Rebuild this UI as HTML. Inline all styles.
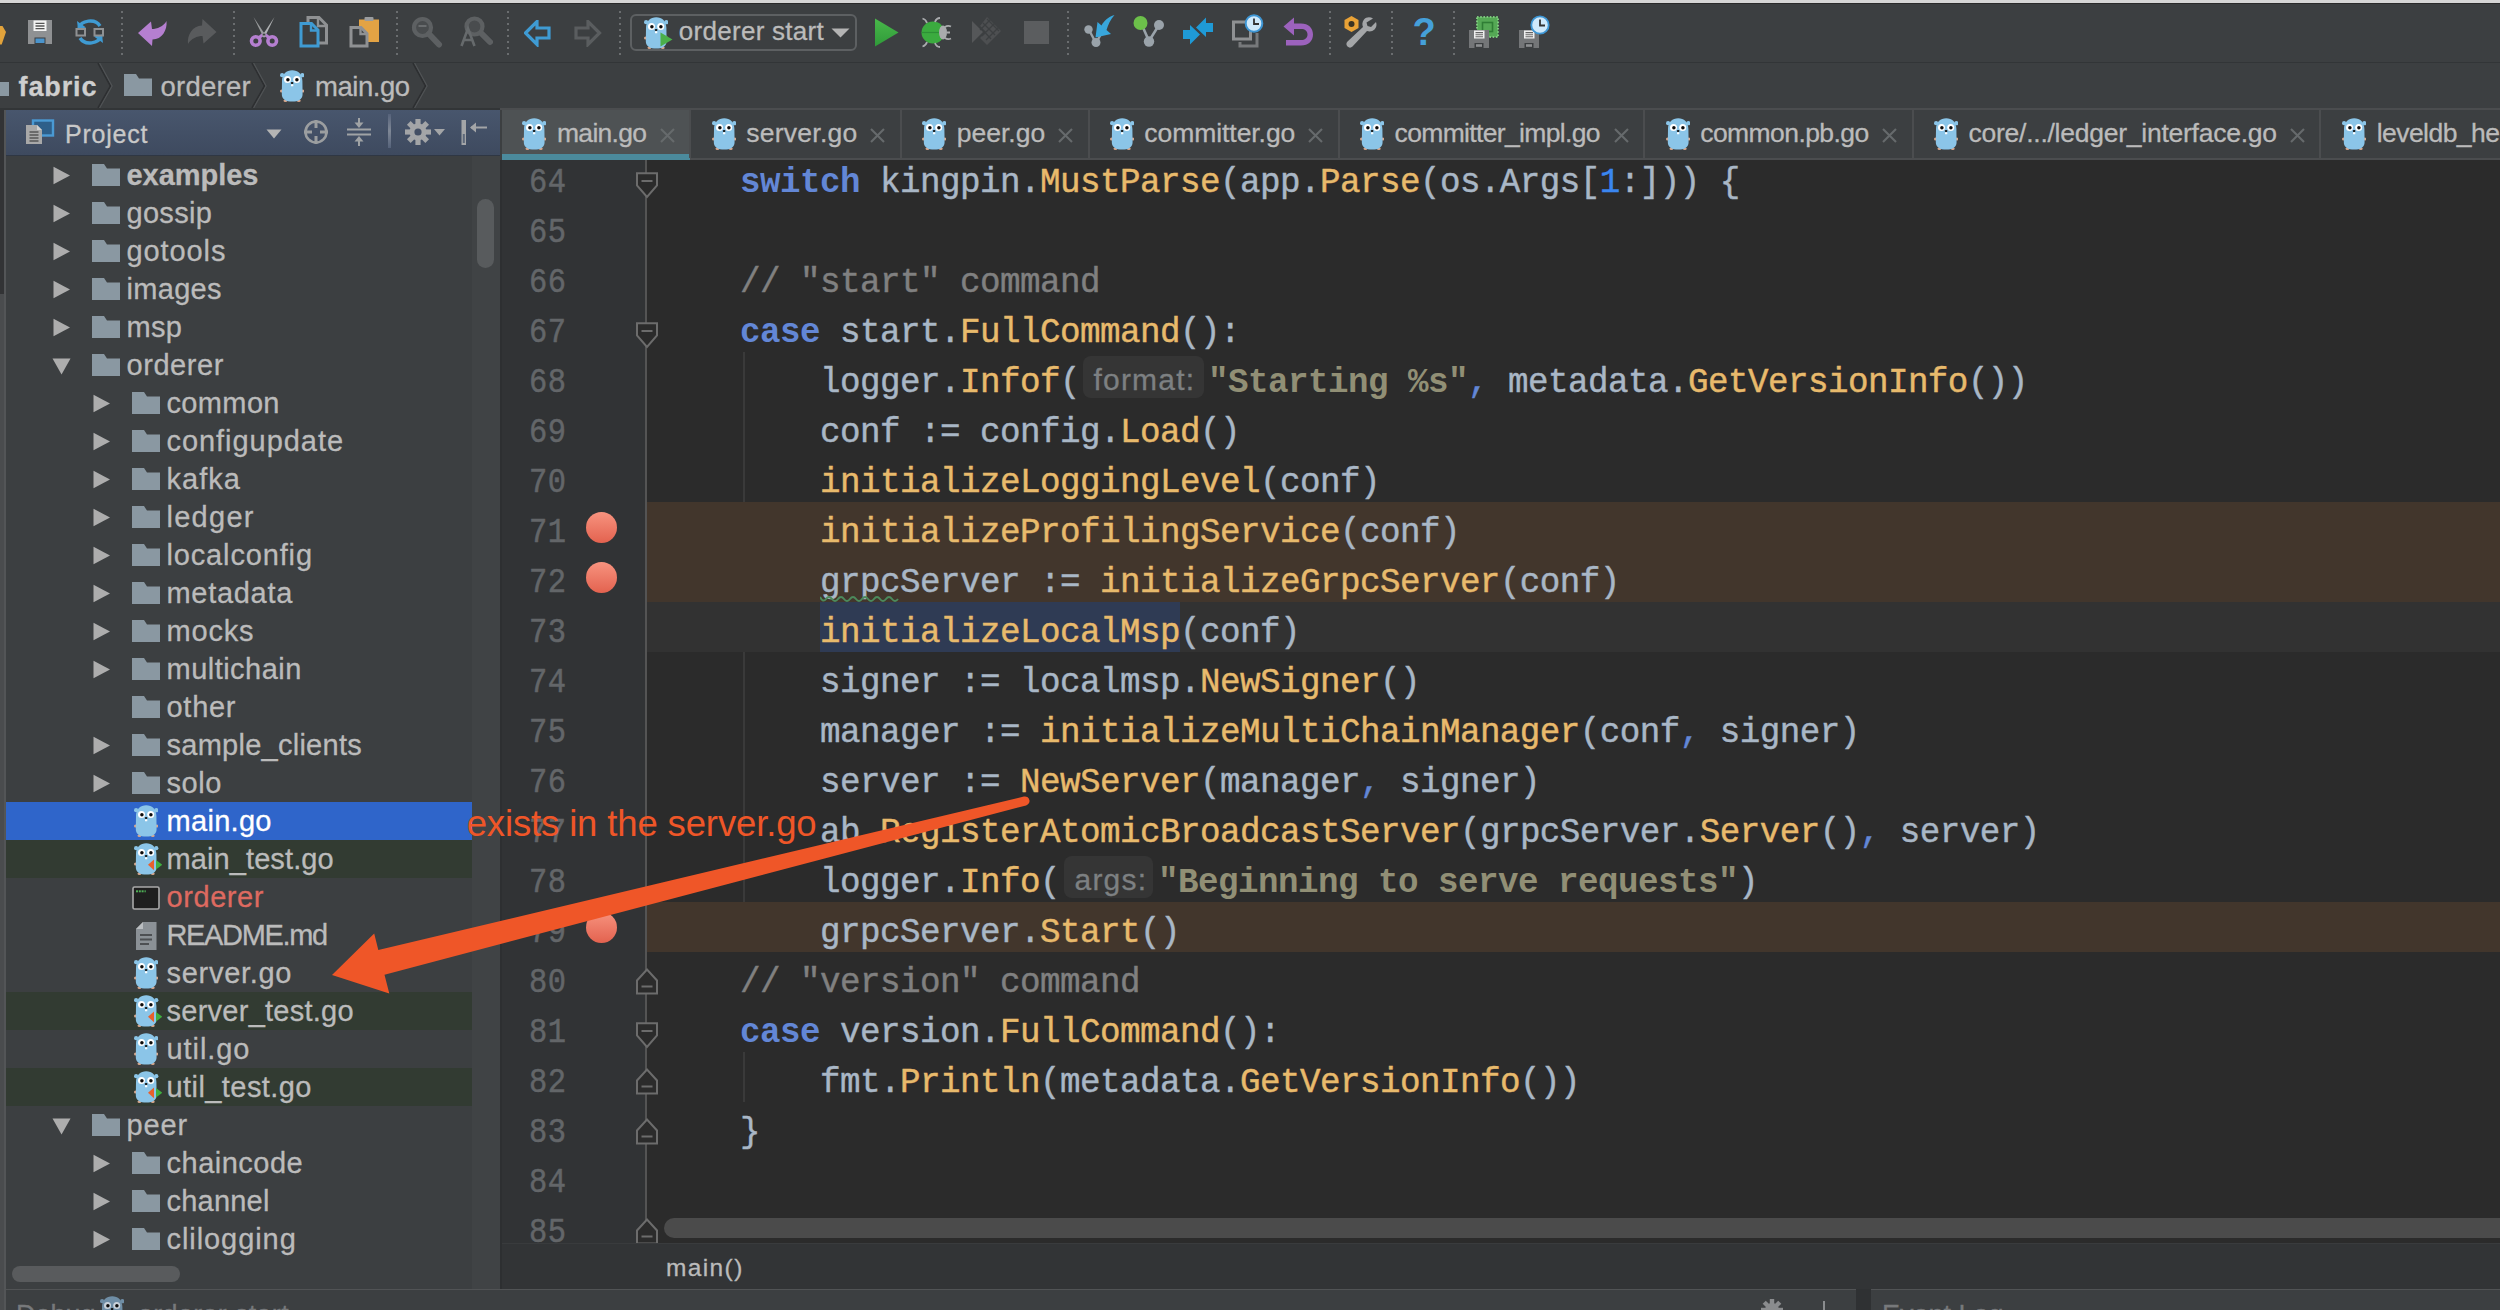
<!DOCTYPE html>
<html><head><meta charset="utf-8"><title>GoLand - fabric - main.go</title>
<style>
html,body{margin:0;padding:0;}
body{width:2500px;height:1310px;overflow:hidden;position:relative;background:#3c3f41;font-family:"Liberation Sans",sans-serif;color:#bbbbbb;}
.abs{position:absolute;display:block;}
.t{position:absolute;white-space:pre;line-height:1;-webkit-text-stroke-width:0.3px;}
.code{-webkit-text-stroke-width:0.45px;position:absolute;white-space:pre;font-family:"Liberation Mono",monospace;font-size:34.2px;letter-spacing:-0.52px;line-height:50px;height:50px;color:#a9b7c6;}
.ln{-webkit-text-stroke-width:0.5px;transform:scaleX(0.89);transform-origin:0 0;position:absolute;white-space:pre;font-family:"Liberation Mono",monospace;font-size:34.2px;letter-spacing:0.5px;line-height:50px;height:50px;color:#636669;left:528px;}
.kw{color:#6387d6;font-weight:bold;-webkit-text-stroke-width:0;}
.fn{color:#e8ba6c;}
.cm{color:#808080;}
.st{color:#918f75;font-weight:bold;-webkit-text-stroke-width:0;}
.nu{color:#3a86f0;}
.pu{color:#6387d6;}
.hint{position:absolute;background:#353535;border-radius:8px;color:#7d8082;font-family:"Liberation Sans",sans-serif;white-space:pre;}
</style></head><body>

<div class="abs" style="left:0;top:0;width:2500px;height:4px;background:#d6d6d6;border-bottom:1px solid #2a2a2a;box-sizing:border-box"></div>
<div class="abs" style="left:0;top:62px;width:2500px;height:1px;background:#323537"></div>
<div class="abs" style="left:0;top:108px;width:2500px;height:2px;background:#323537"></div>
<svg class="abs" style="left:120.6px;top:11px" width="2" height="44" viewBox="0 0 2 44"><rect x="0" y="0" width="2" height="2" fill="#6a6d6f"/><rect x="0" y="6" width="2" height="2" fill="#6a6d6f"/><rect x="0" y="12" width="2" height="2" fill="#6a6d6f"/><rect x="0" y="18" width="2" height="2" fill="#6a6d6f"/><rect x="0" y="24" width="2" height="2" fill="#6a6d6f"/><rect x="0" y="30" width="2" height="2" fill="#6a6d6f"/><rect x="0" y="36" width="2" height="2" fill="#6a6d6f"/><rect x="0" y="42" width="2" height="2" fill="#6a6d6f"/></svg>
<svg class="abs" style="left:233px;top:11px" width="2" height="44" viewBox="0 0 2 44"><rect x="0" y="0" width="2" height="2" fill="#6a6d6f"/><rect x="0" y="6" width="2" height="2" fill="#6a6d6f"/><rect x="0" y="12" width="2" height="2" fill="#6a6d6f"/><rect x="0" y="18" width="2" height="2" fill="#6a6d6f"/><rect x="0" y="24" width="2" height="2" fill="#6a6d6f"/><rect x="0" y="30" width="2" height="2" fill="#6a6d6f"/><rect x="0" y="36" width="2" height="2" fill="#6a6d6f"/><rect x="0" y="42" width="2" height="2" fill="#6a6d6f"/></svg>
<svg class="abs" style="left:395.5px;top:11px" width="2" height="44" viewBox="0 0 2 44"><rect x="0" y="0" width="2" height="2" fill="#6a6d6f"/><rect x="0" y="6" width="2" height="2" fill="#6a6d6f"/><rect x="0" y="12" width="2" height="2" fill="#6a6d6f"/><rect x="0" y="18" width="2" height="2" fill="#6a6d6f"/><rect x="0" y="24" width="2" height="2" fill="#6a6d6f"/><rect x="0" y="30" width="2" height="2" fill="#6a6d6f"/><rect x="0" y="36" width="2" height="2" fill="#6a6d6f"/><rect x="0" y="42" width="2" height="2" fill="#6a6d6f"/></svg>
<svg class="abs" style="left:507px;top:11px" width="2" height="44" viewBox="0 0 2 44"><rect x="0" y="0" width="2" height="2" fill="#6a6d6f"/><rect x="0" y="6" width="2" height="2" fill="#6a6d6f"/><rect x="0" y="12" width="2" height="2" fill="#6a6d6f"/><rect x="0" y="18" width="2" height="2" fill="#6a6d6f"/><rect x="0" y="24" width="2" height="2" fill="#6a6d6f"/><rect x="0" y="30" width="2" height="2" fill="#6a6d6f"/><rect x="0" y="36" width="2" height="2" fill="#6a6d6f"/><rect x="0" y="42" width="2" height="2" fill="#6a6d6f"/></svg>
<svg class="abs" style="left:619px;top:11px" width="2" height="44" viewBox="0 0 2 44"><rect x="0" y="0" width="2" height="2" fill="#6a6d6f"/><rect x="0" y="6" width="2" height="2" fill="#6a6d6f"/><rect x="0" y="12" width="2" height="2" fill="#6a6d6f"/><rect x="0" y="18" width="2" height="2" fill="#6a6d6f"/><rect x="0" y="24" width="2" height="2" fill="#6a6d6f"/><rect x="0" y="30" width="2" height="2" fill="#6a6d6f"/><rect x="0" y="36" width="2" height="2" fill="#6a6d6f"/><rect x="0" y="42" width="2" height="2" fill="#6a6d6f"/></svg>
<svg class="abs" style="left:1067px;top:11px" width="2" height="44" viewBox="0 0 2 44"><rect x="0" y="0" width="2" height="2" fill="#6a6d6f"/><rect x="0" y="6" width="2" height="2" fill="#6a6d6f"/><rect x="0" y="12" width="2" height="2" fill="#6a6d6f"/><rect x="0" y="18" width="2" height="2" fill="#6a6d6f"/><rect x="0" y="24" width="2" height="2" fill="#6a6d6f"/><rect x="0" y="30" width="2" height="2" fill="#6a6d6f"/><rect x="0" y="36" width="2" height="2" fill="#6a6d6f"/><rect x="0" y="42" width="2" height="2" fill="#6a6d6f"/></svg>
<svg class="abs" style="left:1329px;top:11px" width="2" height="44" viewBox="0 0 2 44"><rect x="0" y="0" width="2" height="2" fill="#6a6d6f"/><rect x="0" y="6" width="2" height="2" fill="#6a6d6f"/><rect x="0" y="12" width="2" height="2" fill="#6a6d6f"/><rect x="0" y="18" width="2" height="2" fill="#6a6d6f"/><rect x="0" y="24" width="2" height="2" fill="#6a6d6f"/><rect x="0" y="30" width="2" height="2" fill="#6a6d6f"/><rect x="0" y="36" width="2" height="2" fill="#6a6d6f"/><rect x="0" y="42" width="2" height="2" fill="#6a6d6f"/></svg>
<svg class="abs" style="left:1391px;top:11px" width="2" height="44" viewBox="0 0 2 44"><rect x="0" y="0" width="2" height="2" fill="#6a6d6f"/><rect x="0" y="6" width="2" height="2" fill="#6a6d6f"/><rect x="0" y="12" width="2" height="2" fill="#6a6d6f"/><rect x="0" y="18" width="2" height="2" fill="#6a6d6f"/><rect x="0" y="24" width="2" height="2" fill="#6a6d6f"/><rect x="0" y="30" width="2" height="2" fill="#6a6d6f"/><rect x="0" y="36" width="2" height="2" fill="#6a6d6f"/><rect x="0" y="42" width="2" height="2" fill="#6a6d6f"/></svg>
<svg class="abs" style="left:1453px;top:11px" width="2" height="44" viewBox="0 0 2 44"><rect x="0" y="0" width="2" height="2" fill="#6a6d6f"/><rect x="0" y="6" width="2" height="2" fill="#6a6d6f"/><rect x="0" y="12" width="2" height="2" fill="#6a6d6f"/><rect x="0" y="18" width="2" height="2" fill="#6a6d6f"/><rect x="0" y="24" width="2" height="2" fill="#6a6d6f"/><rect x="0" y="30" width="2" height="2" fill="#6a6d6f"/><rect x="0" y="36" width="2" height="2" fill="#6a6d6f"/><rect x="0" y="42" width="2" height="2" fill="#6a6d6f"/></svg>
<svg class="abs" style="left:0px;top:26px" width="7" height="19" viewBox="0 0 7 19"><path d="M0,0 H2.5 L6,6 L1.7,18.5 H0 Z" fill="#e2a33b"/></svg>
<svg class="abs" style="left:28px;top:20px" width="24" height="24" viewBox="0 0 24 24"><path d="M0,0 H24 V24 H0 Z" fill="#8f9193"/><rect x="5.5" y="0.5" width="13" height="10.5" fill="#f4f4f4"/><path d="M7.5,3.3 H16.5 M7.5,6 H16.5 M7.5,8.7 H16.5" stroke="#555" stroke-width="1.3"/><rect x="6.5" y="17.5" width="11" height="6.5" fill="#3c3f41"/><rect x="7.5" y="18.5" width="9" height="4.5" fill="#4a94cc"/></svg>
<svg class="abs" style="left:75px;top:17px" width="30" height="30" viewBox="0 0 30 30"><path d="M4,11 C6,3.5 20,1 25,9" fill="none" stroke="#3f9bd3" stroke-width="3.4"/><path d="M2,4 L3,12.5 L11,10.5 Z" fill="#3f9bd3"/>
<path d="M26,19 C24,26.5 10,29 5,21" fill="none" stroke="#3f9bd3" stroke-width="3.4"/><path d="M28,26 L27,17.5 L19,19.5 Z" fill="#3f9bd3"/>
<rect x="1.5" y="12" width="8.5" height="6.5" fill="none" stroke="#8f9193" stroke-width="2"/><rect x="19.5" y="12" width="8.5" height="6.5" fill="none" stroke="#8f9193" stroke-width="2"/></svg>
<svg class="abs" style="left:137.5px;top:19.5px" width="30" height="27" viewBox="0 0 30 27"><path d="M0,13 L13,1.5 L14,9 C19,9 25.5,6.5 28.5,1 C29.5,10 24,19.5 14.5,19.5 L14,26 Z" fill="#b57fd0"/></svg>
<svg class="abs" style="left:187px;top:17.5px" width="30" height="27" viewBox="0 0 30 27"><g transform="rotate(180 14.75 13.5)"><path d="M0,13 L13,1.5 L14,9 C19,9 25.5,6.5 28.5,1 C29.5,10 24,19.5 14.5,19.5 L14,26 Z" fill="#595b5d"/></g></svg>
<svg class="abs" style="left:249px;top:16px" width="30" height="32" viewBox="0 0 30 32"><path d="M4.5,1 L17,20 L14.5,21.5 Z" fill="#9a9c9e"/><path d="M25.5,1 L13,20 L15.5,21.5 Z" fill="#b0b2b4"/>
<circle cx="6.8" cy="25" r="4.3" fill="none" stroke="#b57fd0" stroke-width="3.6"/><circle cx="23.2" cy="25" r="4.3" fill="none" stroke="#b57fd0" stroke-width="3.6"/>
<path d="M9.5,22 L14,18.5 M20.5,22 L16,18.5" stroke="#b57fd0" stroke-width="3"/><circle cx="15" cy="18.5" r="1.6" fill="#3c3f41" stroke="#9a9c9e" stroke-width="1"/></svg>
<svg class="abs" style="left:299px;top:16px" width="30" height="32" viewBox="0 0 30 32"><path d="M9,1.5 H20 L27.5,9 V27 H9 Z" fill="none" stroke="#8f9193" stroke-width="3"/><path d="M19,1.5 V10 H27.5" fill="none" stroke="#8f9193" stroke-width="2.4"/>
<path d="M2,7.5 H12.5 L19,14 V30 H2 Z" fill="#3c3f41" stroke="#3f9bd3" stroke-width="3"/><path d="M12,7.5 V14.5 H19" fill="none" stroke="#3f9bd3" stroke-width="2.4"/></svg>
<svg class="abs" style="left:349px;top:16px" width="31" height="32" viewBox="0 0 31 32"><rect x="10" y="3.5" width="20" height="22.5" fill="#e3a344"/><rect x="15.5" y="1" width="9" height="4" rx="1" fill="#9a9c9e"/>
<path d="M2,11.5 H12 L18,17.5 V30 H2 Z" fill="#3c3f41" stroke="#8f9193" stroke-width="3"/><path d="M11.5,11.5 V18 H18" fill="none" stroke="#8f9193" stroke-width="2.4"/></svg>
<svg class="abs" style="left:411px;top:16px" width="32" height="32" viewBox="0 0 32 32"><circle cx="11.5" cy="11.5" r="8.5" fill="#494c4e" stroke="#5d6062" stroke-width="4.2"/><path d="M18,18 L28,28.5" stroke="#5d6062" stroke-width="6" stroke-linecap="round"/><path d="M7.5,10 H15.5" stroke="#6a6d6f" stroke-width="2"/></svg>
<svg class="abs" style="left:460px;top:16px" width="33" height="32" viewBox="0 0 33 32"><circle cx="14.5" cy="10.5" r="8" fill="#494c4e" stroke="#5d6062" stroke-width="4.2"/><path d="M21,17 L30,26" stroke="#5d6062" stroke-width="6" stroke-linecap="round"/><path d="M1.5,30 L8,12.5 L14.5,30 M4,24 H12" fill="none" stroke="#666a6c" stroke-width="2.6"/></svg>
<svg class="abs" style="left:524px;top:19.5px" width="28" height="27" viewBox="0 0 28 27"><path d="M1.5,13 L13,1.5 V8 H25 V18 H13 V24.5 Z" fill="none" stroke="#3f9bd3" stroke-width="3.2" stroke-linejoin="miter"/><path d="M12,11 H22 V15 H12 Z" fill="#3c3f41"/></svg>
<svg class="abs" style="left:574px;top:19.5px" width="28" height="27" viewBox="0 0 28 27"><g transform="translate(27,0) scale(-1,1)"><path d="M1.5,13 L13,1.5 V8 H25 V18 H13 V24.5 Z" fill="none" stroke="#5a5d5f" stroke-width="3.2"/></g></svg>
<div class="abs" style="left:630px;top:14px;width:227px;height:37px;border:2px solid #5d6062;border-radius:6px;box-sizing:border-box;background:#3c3f41"></div>
<svg class="abs" style="left:644px;top:17px" width="24" height="32" viewBox="0 0 24 32">
<circle cx="2.1" cy="5.2" r="2.1" fill="#8bc5e8"/><circle cx="22.3" cy="5.2" r="2.1" fill="#8bc5e8"/>
<ellipse cx="1.5" cy="21" rx="1.5" ry="1.5" fill="#d9a78c"/><ellipse cx="22.7" cy="21" rx="1.5" ry="1.5" fill="#d9a78c"/>
<ellipse cx="5.4" cy="30.8" rx="1.9" ry="1.2" fill="#d9a78c"/><ellipse cx="18.8" cy="30.8" rx="1.9" ry="1.2" fill="#d9a78c"/>
<path d="M2,11 C2,4 6.5,0.2 12.2,0.2 C18,0.2 22.4,4 22.4,11 L22.6,24 C22.6,29.5 18.5,31.6 12.2,31.6 C6,31.6 1.8,29.5 1.8,24 Z" fill="#8bc5e8"/>
<circle cx="7.5" cy="9.4" r="3.5" fill="#ffffff"/><circle cx="16.7" cy="9.4" r="3.5" fill="#ffffff"/>
<circle cx="7.9" cy="9.7" r="1.75" fill="#0c0c0c"/><circle cx="16.9" cy="9.7" r="1.75" fill="#0c0c0c"/>
<rect x="11" y="14.3" width="2.3" height="1.9" rx="0.5" fill="#ffffff"/>
<ellipse cx="12.1" cy="13" rx="1.35" ry="1.05" fill="#111"/>
</svg>
<svg class="abs" style="left:660px;top:32px" width="13" height="15" viewBox="0 0 13 15"><path d="M0.5,0.5 L12.5,7.5 L0.5,14.5 Z" fill="#4bb04a"/></svg>
<div class="t" style="letter-spacing:0.28px;left:678.8px;top:18.3px;font-size:26px;color:#bbbbbb">orderer start</div>
<svg class="abs" style="left:831px;top:28px" width="19" height="10" viewBox="0 0 19 10"><path d="M0.5,0.5 H18.5 L9.5,9.5 Z" fill="#b4b4b4"/></svg>
<svg class="abs" style="left:874px;top:18px" width="25" height="29" viewBox="0 0 25 29"><defs><linearGradient id="gr" x1="0" y1="0" x2="0" y2="1"><stop offset="0" stop-color="#49b84a"/><stop offset="1" stop-color="#2f9a39"/></linearGradient></defs><path d="M1,0.5 L24.5,14.5 L1,28.5 Z" fill="url(#gr)"/></svg>
<svg class="abs" style="left:919px;top:16px" width="33" height="32" viewBox="0 0 33 32"><ellipse cx="14" cy="16.5" rx="11.5" ry="11" fill="#3bab3f"/><path d="M2.5,16.5 H25" stroke="#2d8f36" stroke-width="1.2"/>
<ellipse cx="24" cy="16.5" rx="4" ry="7" fill="#a9abad"/>
<path d="M8,7 C7,4 5.5,3 3.5,2.5 M16,6 C17,3 19,2 21,2 M8,26 C7,29 5.5,30 3.5,30.5 M16,27 C17,30 19,31 21,31 M26,11 C28,9.5 30,9.5 32,10.5 M26,22 C28,23.5 30,23.5 32,22.5 M28,16.5 H31" fill="none" stroke="#a9abad" stroke-width="1.8"/></svg>
<svg class="abs" style="left:971px;top:17px" width="30" height="30" viewBox="0 0 30 30"><path d="M1,4 L12,15 L1,26 Z" fill="#555759"/><path d="M16,0 L30,14 L16,28 L9,21 L15,15 L9,9 Z" fill="#4d4f51"/><path d="M12,6 L24,18 M16,2 L28,14 M9,10 L20,22 M20,2 L9,13 M24,6 L11,19 M28,10 L15,23 " stroke="#3c3f41" stroke-width="1.3"/></svg>
<svg class="abs" style="left:1024px;top:21px" width="25" height="23" viewBox="0 0 25 23"><rect width="25" height="23" fill="#5b5d5f"/></svg>
<svg class="abs" style="left:1083px;top:14px" width="32" height="34" viewBox="0 0 32 34"><path d="M6,16 L13,29 M13,29 L18,20" stroke="#9aa3aa" stroke-width="2.4"/><circle cx="5.5" cy="15.5" r="4.2" fill="#9aa3aa"/><circle cx="13" cy="28.5" r="4.5" fill="#9aa3aa"/>
<path d="M31.5,1 C25,3 21,7 18.5,11.5 L14.5,8 L12.5,23.5 L28,20 L23.5,16 C25,11 27.5,5.5 31.5,1 Z" fill="#38a7dc"/></svg>
<svg class="abs" style="left:1132px;top:15px" width="33" height="33" viewBox="0 0 33 33"><path d="M9,8 L17,26 L27,10" fill="none" stroke="#9aa3aa" stroke-width="2.6"/><circle cx="8.5" cy="8" r="7" fill="#6cc04a"/><circle cx="27" cy="10" r="5" fill="#9aa3aa"/><circle cx="17" cy="26.5" r="5.2" fill="#9aa3aa"/></svg>
<svg class="abs" style="left:1183px;top:16px" width="31" height="31" viewBox="0 0 31 31"><path d="M0,15 H7 V10 L17,19.5 L7,29.5 V24 H0 Z" fill="#1f9ad6" transform="translate(0,-1)"/><path d="M30,7 H23 V1.5 L13,11.5 L23,21 V16 H30 Z" fill="#1f9ad6"/></svg>
<svg class="abs" style="left:1232px;top:14px" width="32" height="34" viewBox="0 0 32 34"><rect x="1.5" y="8" width="17" height="17" fill="none" stroke="#8f9193" stroke-width="3"/><path d="M8,28 V32 H25 V19" fill="none" stroke="#77797b" stroke-width="3"/>
<circle cx="22" cy="9.5" r="8.3" fill="#cfe9fb" stroke="#3e96d4" stroke-width="2"/><path d="M22,4.5 V10 H27" fill="none" stroke="#333" stroke-width="1.8"/></svg>
<svg class="abs" style="left:1283px;top:17px" width="31" height="30" viewBox="0 0 31 30"><path d="M0.5,9.5 L11,0.5 V6.5 H18 C25.5,6.5 30,11 30,17.5 C30,24 25.5,28.5 18,28.5 H3 V23 H18 C22,23 24.5,21 24.5,17.5 C24.5,14 22,12 18,12 H11 V18.5 Z" fill="#9c62bd"/></svg>
<svg class="abs" style="left:1343px;top:15px" width="34" height="33" viewBox="0 0 34 33"><path d="M30,3.5 C27,1.5 23,2 21,4.5 C19,7 19,10 20,12 L4.5,26.5 C3,28 3,30 4.5,31.5 C6,33 8,33 9.5,31.5 L24,16 C26.5,17 29.5,16.5 31.5,14.5 C33.5,12.5 34,9.5 33,7 L28,12 L24.5,11 L23.5,7.5 Z" fill="#a4a6a8"/>
<circle cx="4" cy="28.5" r="0" fill="#3c3f41"/><path d="M3.5,27 L8,31.5" stroke="#3c3f41" stroke-width="0"/>
<path d="M8.5,1 L15.5,5 V13 L8.5,17 L1.5,13 V5 Z" fill="#e9a236"/><circle cx="8.5" cy="9" r="3" fill="#3a3323"/></svg>
<div class="t" style="left:1412.5px;top:13px;font-size:38px;font-weight:bold;color:#45a0da;-webkit-text-stroke-width:0">?</div>
<svg class="abs" style="left:1476px;top:16px" width="23" height="22" viewBox="0 0 23 22"><rect x="1" y="1" width="21" height="20" fill="#55a855" stroke="#7cc77c" stroke-width="2" stroke-dasharray="1.6 1.6"/><rect x="6.5" y="6.5" width="10" height="9" fill="none" stroke="#2f7d35" stroke-width="1.6"/></svg>
<svg class="abs" style="left:1469px;top:30px" width="20" height="18" viewBox="0 0 20 18"><path d="M0,0 H20 V18 H0 Z" fill="#747678"/><rect x="5" y="0.5" width="10.5" height="8" fill="#f0f0f0"/><path d="M6.5,2.6 H14 M6.5,4.7 H14 M6.5,6.8 H14" stroke="#666" stroke-width="1.1"/><rect x="5.5" y="13" width="9" height="5" fill="#3c3f41"/><rect x="7" y="14.2" width="6" height="2.6" fill="#8e9092"/></svg>
<svg class="abs" style="left:1519px;top:30px" width="20" height="18" viewBox="0 0 20 18"><path d="M0,0 H20 V18 H0 Z" fill="#747678"/><rect x="5" y="0.5" width="10.5" height="8" fill="#f0f0f0"/><path d="M6.5,2.6 H14 M6.5,4.7 H14 M6.5,6.8 H14" stroke="#666" stroke-width="1.1"/><rect x="5.5" y="13" width="9" height="5" fill="#3c3f41"/><rect x="7" y="14.2" width="6" height="2.6" fill="#8e9092"/></svg>
<svg class="abs" style="left:1530px;top:15px" width="20" height="20" viewBox="0 0 20 20"><circle cx="10" cy="10" r="8.7" fill="#cfe9fb" stroke="#3e96d4" stroke-width="1.8"/><path d="M10,4.5 V10.5 H15" fill="none" stroke="#333" stroke-width="1.8"/></svg>
<div class="abs" style="left:0;top:82px;width:9px;height:14px;background:#8a98a2"></div>
<div class="t" style="letter-spacing:0.89px;left:18.5px;top:73.6px;font-size:27px;font-weight:bold;color:#cfcfcf">fabric</div>
<svg class="abs" style="left:124px;top:74px" width="28" height="22" viewBox="0 0 28 22"><path d="M0,0 H12 L15,4.6 H28 V22 H0 Z" fill="#8a98a2"/></svg>
<div class="t" style="letter-spacing:0.22px;left:160.6px;top:72.6px;font-size:27.5px;color:#bbbbbb">orderer</div>
<svg class="abs" style="left:280px;top:70px" width="24" height="32" viewBox="0 0 24 32">
<circle cx="2.1" cy="5.2" r="2.1" fill="#8bc5e8"/><circle cx="22.3" cy="5.2" r="2.1" fill="#8bc5e8"/>
<ellipse cx="1.5" cy="21" rx="1.5" ry="1.5" fill="#d9a78c"/><ellipse cx="22.7" cy="21" rx="1.5" ry="1.5" fill="#d9a78c"/>
<ellipse cx="5.4" cy="30.8" rx="1.9" ry="1.2" fill="#d9a78c"/><ellipse cx="18.8" cy="30.8" rx="1.9" ry="1.2" fill="#d9a78c"/>
<path d="M2,11 C2,4 6.5,0.2 12.2,0.2 C18,0.2 22.4,4 22.4,11 L22.6,24 C22.6,29.5 18.5,31.6 12.2,31.6 C6,31.6 1.8,29.5 1.8,24 Z" fill="#8bc5e8"/>
<circle cx="7.5" cy="9.4" r="3.5" fill="#ffffff"/><circle cx="16.7" cy="9.4" r="3.5" fill="#ffffff"/>
<circle cx="7.9" cy="9.7" r="1.75" fill="#0c0c0c"/><circle cx="16.9" cy="9.7" r="1.75" fill="#0c0c0c"/>
<rect x="11" y="14.3" width="2.3" height="1.9" rx="0.5" fill="#ffffff"/>
<ellipse cx="12.1" cy="13" rx="1.35" ry="1.05" fill="#111"/>
</svg>
<div class="t" style="letter-spacing:-0.47px;left:315px;top:72.6px;font-size:27.5px;color:#bbbbbb">main.go</div>
<svg class="abs" style="left:96.2px;top:63px" width="18" height="45" viewBox="0 0 18 45"><path d="M2,0 L14.5,23 L2,45" fill="none" stroke="#2d2f31" stroke-width="1.6"/><path d="M3.6,0 L16.1,23 L3.6,45" fill="none" stroke="#505355" stroke-width="1.2"/></svg>
<svg class="abs" style="left:250px;top:63px" width="18" height="45" viewBox="0 0 18 45"><path d="M2,0 L14.5,23 L2,45" fill="none" stroke="#2d2f31" stroke-width="1.6"/><path d="M3.6,0 L16.1,23 L3.6,45" fill="none" stroke="#505355" stroke-width="1.2"/></svg>
<svg class="abs" style="left:410.5px;top:63px" width="18" height="45" viewBox="0 0 18 45"><path d="M2,0 L14.5,23 L2,45" fill="none" stroke="#2d2f31" stroke-width="1.6"/><path d="M3.6,0 L16.1,23 L3.6,45" fill="none" stroke="#505355" stroke-width="1.2"/></svg>
<div class="abs" style="left:0;top:110px;width:4px;height:184px;background:#323335"></div>
<div class="abs" style="left:0;top:294px;width:4px;height:1016px;background:#4a4c4e"></div>
<div class="abs" style="left:4px;top:110px;width:2px;height:1200px;background:#535557"></div>
<div class="abs" style="left:6px;top:110px;width:494px;height:46px;background:linear-gradient(#48566d,#3e4a5f);border-bottom:1px solid #2f3744;box-sizing:border-box"></div>
<svg class="abs" style="left:26px;top:119px" width="30" height="26" viewBox="0 0 30 26">
<rect x="7" y="1.5" width="20" height="15" fill="#2e5f8a" stroke="#4a9ad4" stroke-width="2.4"/>
<path d="M0,6 H11 L16,11 V25 H0 Z" fill="#a8a8a8"/><path d="M11,6 V11 H16 Z" fill="#d0d0d0"/>
<path d="M3.5,13 H12.5 M3.5,16 H12.5 M3.5,19 H12.5 M3.5,22 H12.5" stroke="#555" stroke-width="1.4"/></svg>
<div class="t" style="letter-spacing:0.78px;left:65px;top:122px;font-size:25px;color:#c8c8c8">Project</div>
<svg class="abs" style="left:266px;top:129px" width="16" height="10" viewBox="0 0 16 10"><path d="M0.5,0.5 H15.5 L8,9.5 Z" fill="#b4b4b4"/></svg>
<svg class="abs" style="left:303px;top:119px" width="26" height="26" viewBox="0 0 26 26"><circle cx="13" cy="13" r="10.5" fill="none" stroke="#9b9ea0" stroke-width="2.6"/>
<path d="M13,1 V9 M13,17 V25 M1,13 H9 M17,13 H25" stroke="#9b9ea0" stroke-width="3"/></svg>
<svg class="abs" style="left:347px;top:118px" width="24" height="28" viewBox="0 0 24 28"><path d="M0,11.5 H24 M0,16.5 H24" stroke="#a0a3a5" stroke-width="2"/>
<path d="M12,0 V7" stroke="#a0a3a5" stroke-width="2"/><path d="M7.5,4.5 H16.5 L12,10 Z" fill="#a0a3a5"/>
<path d="M12,28 V21" stroke="#a0a3a5" stroke-width="2"/><path d="M7.5,23.5 H16.5 L12,18 Z" fill="#a0a3a5"/></svg>
<div class="abs" style="left:388px;top:114px;width:3px;height:34px;background:linear-gradient(#55627a,#7f8896,#55627a)"></div>
<svg class="abs" style="left:405px;top:119px" width="42" height="26" viewBox="0 0 42 26">
<g transform="translate(13,13)" fill="#a3a5a7"><circle r="8.5"/>
<g id="teeth"><rect x="-2.6" y="-13" width="5.2" height="6"/><rect x="-2.6" y="7" width="5.2" height="6"/><rect x="-13" y="-2.6" width="6" height="5.2"/><rect x="7" y="-2.6" width="6" height="5.2"/></g>
<g transform="rotate(45)"><rect x="-2.6" y="-13" width="5.2" height="6"/><rect x="-2.6" y="7" width="5.2" height="6"/><rect x="-13" y="-2.6" width="6" height="5.2"/><rect x="7" y="-2.6" width="6" height="5.2"/></g>
<circle r="3.6" fill="#434f64"/></g>
<path d="M29,10 H40 L34.5,16.5 Z" fill="#a3a5a7"/></svg>
<svg class="abs" style="left:461px;top:120px" width="27" height="25" viewBox="0 0 27 25"><rect x="0.5" y="0" width="4.5" height="25" fill="#a3a5a7"/><rect x="1.8" y="14" width="2" height="9" fill="#5d6879"/>
<path d="M10,7.5 H26" stroke="#a3a5a7" stroke-width="2"/><path d="M15,2.5 L9,7.5 L15,12.5 Z" fill="#a3a5a7"/></svg>
<svg class="abs" style="left:53px;top:166px" width="18" height="19" viewBox="0 0 18 19"><path d="M0.5,0.8 L17,9.5 L0.5,18.2 Z" fill="#adadad"/></svg>
<svg class="abs" style="left:92px;top:164px" width="28" height="22" viewBox="0 0 28 22"><path d="M0,0 H12 L15,4.6 H28 V22 H0 Z" fill="#8a98a2"/></svg>
<div class="t" style="letter-spacing:-0.03px;left:126.5px;top:160.9px;font-size:29px;color:#bbbbbb;font-weight:bold">examples</div>
<svg class="abs" style="left:53px;top:204px" width="18" height="19" viewBox="0 0 18 19"><path d="M0.5,0.8 L17,9.5 L0.5,18.2 Z" fill="#adadad"/></svg>
<svg class="abs" style="left:92px;top:202px" width="28" height="22" viewBox="0 0 28 22"><path d="M0,0 H12 L15,4.6 H28 V22 H0 Z" fill="#8a98a2"/></svg>
<div class="t" style="letter-spacing:0.29px;left:126.5px;top:198.9px;font-size:29px;color:#bbbbbb;font-weight:normal">gossip</div>
<svg class="abs" style="left:53px;top:242px" width="18" height="19" viewBox="0 0 18 19"><path d="M0.5,0.8 L17,9.5 L0.5,18.2 Z" fill="#adadad"/></svg>
<svg class="abs" style="left:92px;top:240px" width="28" height="22" viewBox="0 0 28 22"><path d="M0,0 H12 L15,4.6 H28 V22 H0 Z" fill="#8a98a2"/></svg>
<div class="t" style="letter-spacing:0.91px;left:126.5px;top:236.9px;font-size:29px;color:#bbbbbb;font-weight:normal">gotools</div>
<svg class="abs" style="left:53px;top:280px" width="18" height="19" viewBox="0 0 18 19"><path d="M0.5,0.8 L17,9.5 L0.5,18.2 Z" fill="#adadad"/></svg>
<svg class="abs" style="left:92px;top:278px" width="28" height="22" viewBox="0 0 28 22"><path d="M0,0 H12 L15,4.6 H28 V22 H0 Z" fill="#8a98a2"/></svg>
<div class="t" style="letter-spacing:0.30px;left:126.5px;top:274.9px;font-size:29px;color:#bbbbbb;font-weight:normal">images</div>
<svg class="abs" style="left:53px;top:318px" width="18" height="19" viewBox="0 0 18 19"><path d="M0.5,0.8 L17,9.5 L0.5,18.2 Z" fill="#adadad"/></svg>
<svg class="abs" style="left:92px;top:316px" width="28" height="22" viewBox="0 0 28 22"><path d="M0,0 H12 L15,4.6 H28 V22 H0 Z" fill="#8a98a2"/></svg>
<div class="t" style="letter-spacing:0.30px;left:126.5px;top:312.9px;font-size:29px;color:#bbbbbb;font-weight:normal">msp</div>
<svg class="abs" style="left:52px;top:358px" width="19" height="17" viewBox="0 0 19 17"><path d="M0.5,0.5 H18.5 L9.5,16.5 Z" fill="#adadad"/></svg>
<svg class="abs" style="left:92px;top:354px" width="28" height="22" viewBox="0 0 28 22"><path d="M0,0 H12 L15,4.6 H28 V22 H0 Z" fill="#8a98a2"/></svg>
<div class="t" style="letter-spacing:0.55px;left:126.5px;top:350.9px;font-size:29px;color:#bbbbbb;font-weight:normal">orderer</div>
<svg class="abs" style="left:93px;top:394px" width="18" height="19" viewBox="0 0 18 19"><path d="M0.5,0.8 L17,9.5 L0.5,18.2 Z" fill="#adadad"/></svg>
<svg class="abs" style="left:132px;top:392px" width="28" height="22" viewBox="0 0 28 22"><path d="M0,0 H12 L15,4.6 H28 V22 H0 Z" fill="#8a98a2"/></svg>
<div class="t" style="letter-spacing:0.36px;left:166.5px;top:388.9px;font-size:29px;color:#bbbbbb;font-weight:normal">common</div>
<svg class="abs" style="left:93px;top:432px" width="18" height="19" viewBox="0 0 18 19"><path d="M0.5,0.8 L17,9.5 L0.5,18.2 Z" fill="#adadad"/></svg>
<svg class="abs" style="left:132px;top:430px" width="28" height="22" viewBox="0 0 28 22"><path d="M0,0 H12 L15,4.6 H28 V22 H0 Z" fill="#8a98a2"/></svg>
<div class="t" style="letter-spacing:0.95px;left:166.5px;top:426.9px;font-size:29px;color:#bbbbbb;font-weight:normal">configupdate</div>
<svg class="abs" style="left:93px;top:470px" width="18" height="19" viewBox="0 0 18 19"><path d="M0.5,0.8 L17,9.5 L0.5,18.2 Z" fill="#adadad"/></svg>
<svg class="abs" style="left:132px;top:468px" width="28" height="22" viewBox="0 0 28 22"><path d="M0,0 H12 L15,4.6 H28 V22 H0 Z" fill="#8a98a2"/></svg>
<div class="t" style="letter-spacing:1.02px;left:166.5px;top:464.9px;font-size:29px;color:#bbbbbb;font-weight:normal">kafka</div>
<svg class="abs" style="left:93px;top:508px" width="18" height="19" viewBox="0 0 18 19"><path d="M0.5,0.8 L17,9.5 L0.5,18.2 Z" fill="#adadad"/></svg>
<svg class="abs" style="left:132px;top:506px" width="28" height="22" viewBox="0 0 28 22"><path d="M0,0 H12 L15,4.6 H28 V22 H0 Z" fill="#8a98a2"/></svg>
<div class="t" style="letter-spacing:1.27px;left:166.5px;top:502.9px;font-size:29px;color:#bbbbbb;font-weight:normal">ledger</div>
<svg class="abs" style="left:93px;top:546px" width="18" height="19" viewBox="0 0 18 19"><path d="M0.5,0.8 L17,9.5 L0.5,18.2 Z" fill="#adadad"/></svg>
<svg class="abs" style="left:132px;top:544px" width="28" height="22" viewBox="0 0 28 22"><path d="M0,0 H12 L15,4.6 H28 V22 H0 Z" fill="#8a98a2"/></svg>
<div class="t" style="letter-spacing:0.85px;left:166.5px;top:540.9px;font-size:29px;color:#bbbbbb;font-weight:normal">localconfig</div>
<svg class="abs" style="left:93px;top:584px" width="18" height="19" viewBox="0 0 18 19"><path d="M0.5,0.8 L17,9.5 L0.5,18.2 Z" fill="#adadad"/></svg>
<svg class="abs" style="left:132px;top:582px" width="28" height="22" viewBox="0 0 28 22"><path d="M0,0 H12 L15,4.6 H28 V22 H0 Z" fill="#8a98a2"/></svg>
<div class="t" style="letter-spacing:0.70px;left:166.5px;top:578.9px;font-size:29px;color:#bbbbbb;font-weight:normal">metadata</div>
<svg class="abs" style="left:93px;top:622px" width="18" height="19" viewBox="0 0 18 19"><path d="M0.5,0.8 L17,9.5 L0.5,18.2 Z" fill="#adadad"/></svg>
<svg class="abs" style="left:132px;top:620px" width="28" height="22" viewBox="0 0 28 22"><path d="M0,0 H12 L15,4.6 H28 V22 H0 Z" fill="#8a98a2"/></svg>
<div class="t" style="letter-spacing:0.80px;left:166.5px;top:616.9px;font-size:29px;color:#bbbbbb;font-weight:normal">mocks</div>
<svg class="abs" style="left:93px;top:660px" width="18" height="19" viewBox="0 0 18 19"><path d="M0.5,0.8 L17,9.5 L0.5,18.2 Z" fill="#adadad"/></svg>
<svg class="abs" style="left:132px;top:658px" width="28" height="22" viewBox="0 0 28 22"><path d="M0,0 H12 L15,4.6 H28 V22 H0 Z" fill="#8a98a2"/></svg>
<div class="t" style="letter-spacing:0.47px;left:166.5px;top:654.9px;font-size:29px;color:#bbbbbb;font-weight:normal">multichain</div>
<svg class="abs" style="left:132px;top:696px" width="28" height="22" viewBox="0 0 28 22"><path d="M0,0 H12 L15,4.6 H28 V22 H0 Z" fill="#8a98a2"/></svg>
<div class="t" style="letter-spacing:0.72px;left:166.5px;top:692.9px;font-size:29px;color:#bbbbbb;font-weight:normal">other</div>
<svg class="abs" style="left:93px;top:736px" width="18" height="19" viewBox="0 0 18 19"><path d="M0.5,0.8 L17,9.5 L0.5,18.2 Z" fill="#adadad"/></svg>
<svg class="abs" style="left:132px;top:734px" width="28" height="22" viewBox="0 0 28 22"><path d="M0,0 H12 L15,4.6 H28 V22 H0 Z" fill="#8a98a2"/></svg>
<div class="t" style="letter-spacing:0.26px;left:166.5px;top:730.9px;font-size:29px;color:#bbbbbb;font-weight:normal">sample_clients</div>
<svg class="abs" style="left:93px;top:774px" width="18" height="19" viewBox="0 0 18 19"><path d="M0.5,0.8 L17,9.5 L0.5,18.2 Z" fill="#adadad"/></svg>
<svg class="abs" style="left:132px;top:772px" width="28" height="22" viewBox="0 0 28 22"><path d="M0,0 H12 L15,4.6 H28 V22 H0 Z" fill="#8a98a2"/></svg>
<div class="t" style="letter-spacing:0.60px;left:166.5px;top:768.9px;font-size:29px;color:#bbbbbb;font-weight:normal">solo</div>
<div class="abs" style="left:6px;top:802px;width:466px;height:38px;background:#2f65ca"></div>
<svg class="abs" style="left:134px;top:805px" width="24" height="32" viewBox="0 0 24 32">
<circle cx="2.1" cy="5.2" r="2.1" fill="#8bc5e8"/><circle cx="22.3" cy="5.2" r="2.1" fill="#8bc5e8"/>
<ellipse cx="1.5" cy="21" rx="1.5" ry="1.5" fill="#d9a78c"/><ellipse cx="22.7" cy="21" rx="1.5" ry="1.5" fill="#d9a78c"/>
<ellipse cx="5.4" cy="30.8" rx="1.9" ry="1.2" fill="#d9a78c"/><ellipse cx="18.8" cy="30.8" rx="1.9" ry="1.2" fill="#d9a78c"/>
<path d="M2,11 C2,4 6.5,0.2 12.2,0.2 C18,0.2 22.4,4 22.4,11 L22.6,24 C22.6,29.5 18.5,31.6 12.2,31.6 C6,31.6 1.8,29.5 1.8,24 Z" fill="#8bc5e8"/>
<circle cx="7.5" cy="9.4" r="3.5" fill="#ffffff"/><circle cx="16.7" cy="9.4" r="3.5" fill="#ffffff"/>
<circle cx="7.9" cy="9.7" r="1.75" fill="#0c0c0c"/><circle cx="16.9" cy="9.7" r="1.75" fill="#0c0c0c"/>
<rect x="11" y="14.3" width="2.3" height="1.9" rx="0.5" fill="#ffffff"/>
<ellipse cx="12.1" cy="13" rx="1.35" ry="1.05" fill="#111"/>
</svg>
<div class="t" style="letter-spacing:0.30px;left:166.5px;top:806.9px;font-size:29px;color:#ffffff;font-weight:normal">main.go</div>
<div class="abs" style="left:6px;top:840px;width:466px;height:38px;background:#323b32"></div>
<svg class="abs" style="left:134px;top:843px" width="28" height="32" viewBox="0 0 28 32">
<circle cx="2.1" cy="5.2" r="2.1" fill="#8bc5e8"/><circle cx="22.3" cy="5.2" r="2.1" fill="#8bc5e8"/>
<ellipse cx="1.5" cy="21" rx="1.5" ry="1.5" fill="#d9a78c"/><ellipse cx="22.7" cy="21" rx="1.5" ry="1.5" fill="#d9a78c"/>
<ellipse cx="5.4" cy="30.8" rx="1.9" ry="1.2" fill="#d9a78c"/><ellipse cx="18.8" cy="30.8" rx="1.9" ry="1.2" fill="#d9a78c"/>
<path d="M2,11 C2,4 6.5,0.2 12.2,0.2 C18,0.2 22.4,4 22.4,11 L22.6,24 C22.6,29.5 18.5,31.6 12.2,31.6 C6,31.6 1.8,29.5 1.8,24 Z" fill="#8bc5e8"/>
<circle cx="7.5" cy="9.4" r="3.5" fill="#ffffff"/><circle cx="16.7" cy="9.4" r="3.5" fill="#ffffff"/>
<circle cx="7.9" cy="9.7" r="1.75" fill="#0c0c0c"/><circle cx="16.9" cy="9.7" r="1.75" fill="#0c0c0c"/>
<rect x="11" y="14.3" width="2.3" height="1.9" rx="0.5" fill="#ffffff"/>
<ellipse cx="12.1" cy="13" rx="1.35" ry="1.05" fill="#111"/>
<path d="M20,16.5 L14,21.8 L20,27.2 Z" fill="#e8602c"/><path d="M22,17 L28.4,21.8 L22,26.6 Z" fill="#3fae3f"/></svg>
<div class="t" style="letter-spacing:0.10px;left:166.5px;top:844.9px;font-size:29px;color:#bbbbbb;font-weight:normal">main_test.go</div>
<svg class="abs" style="left:132px;top:885.5px" width="28" height="26" viewBox="0 0 28 26"><rect x="1" y="1" width="26" height="22" rx="1.5" fill="#1f1f1f" stroke="#a9a9a9" stroke-width="1.6"/><rect x="4" y="4.3" width="2" height="2" fill="#4fae56"/><rect x="6.8" y="4.3" width="2" height="2" fill="#4fae56"/><rect x="9.6" y="4.3" width="2" height="2" fill="#4fae56"/><rect x="12.4" y="4.3" width="1.6" height="2" fill="#3f8a46"/></svg>
<div class="t" style="letter-spacing:0.58px;left:166.5px;top:882.9px;font-size:29px;color:#de6a60;font-weight:normal">orderer</div>
<svg class="abs" style="left:136px;top:922px" width="21" height="28" viewBox="0 0 21 28"><path d="M7,0 H20.5 V28 H0 V7 Z" fill="#8b9196"/><path d="M7,0 V7 H0 Z" fill="#b9bdc0"/><path d="M4,13 H16 M4,17.5 H16 M4,22 H13" stroke="#4d5053" stroke-width="2.2"/></svg>
<div class="t" style="letter-spacing:-1.35px;left:166.5px;top:920.9px;font-size:29px;color:#bbbbbb;font-weight:normal">README.md</div>
<svg class="abs" style="left:134px;top:957px" width="24" height="32" viewBox="0 0 24 32">
<circle cx="2.1" cy="5.2" r="2.1" fill="#8bc5e8"/><circle cx="22.3" cy="5.2" r="2.1" fill="#8bc5e8"/>
<ellipse cx="1.5" cy="21" rx="1.5" ry="1.5" fill="#d9a78c"/><ellipse cx="22.7" cy="21" rx="1.5" ry="1.5" fill="#d9a78c"/>
<ellipse cx="5.4" cy="30.8" rx="1.9" ry="1.2" fill="#d9a78c"/><ellipse cx="18.8" cy="30.8" rx="1.9" ry="1.2" fill="#d9a78c"/>
<path d="M2,11 C2,4 6.5,0.2 12.2,0.2 C18,0.2 22.4,4 22.4,11 L22.6,24 C22.6,29.5 18.5,31.6 12.2,31.6 C6,31.6 1.8,29.5 1.8,24 Z" fill="#8bc5e8"/>
<circle cx="7.5" cy="9.4" r="3.5" fill="#ffffff"/><circle cx="16.7" cy="9.4" r="3.5" fill="#ffffff"/>
<circle cx="7.9" cy="9.7" r="1.75" fill="#0c0c0c"/><circle cx="16.9" cy="9.7" r="1.75" fill="#0c0c0c"/>
<rect x="11" y="14.3" width="2.3" height="1.9" rx="0.5" fill="#ffffff"/>
<ellipse cx="12.1" cy="13" rx="1.35" ry="1.05" fill="#111"/>
</svg>
<div class="t" style="letter-spacing:0.71px;left:166.5px;top:958.9px;font-size:29px;color:#bbbbbb;font-weight:normal">server.go</div>
<div class="abs" style="left:6px;top:992px;width:466px;height:38px;background:#323b32"></div>
<svg class="abs" style="left:134px;top:995px" width="28" height="32" viewBox="0 0 28 32">
<circle cx="2.1" cy="5.2" r="2.1" fill="#8bc5e8"/><circle cx="22.3" cy="5.2" r="2.1" fill="#8bc5e8"/>
<ellipse cx="1.5" cy="21" rx="1.5" ry="1.5" fill="#d9a78c"/><ellipse cx="22.7" cy="21" rx="1.5" ry="1.5" fill="#d9a78c"/>
<ellipse cx="5.4" cy="30.8" rx="1.9" ry="1.2" fill="#d9a78c"/><ellipse cx="18.8" cy="30.8" rx="1.9" ry="1.2" fill="#d9a78c"/>
<path d="M2,11 C2,4 6.5,0.2 12.2,0.2 C18,0.2 22.4,4 22.4,11 L22.6,24 C22.6,29.5 18.5,31.6 12.2,31.6 C6,31.6 1.8,29.5 1.8,24 Z" fill="#8bc5e8"/>
<circle cx="7.5" cy="9.4" r="3.5" fill="#ffffff"/><circle cx="16.7" cy="9.4" r="3.5" fill="#ffffff"/>
<circle cx="7.9" cy="9.7" r="1.75" fill="#0c0c0c"/><circle cx="16.9" cy="9.7" r="1.75" fill="#0c0c0c"/>
<rect x="11" y="14.3" width="2.3" height="1.9" rx="0.5" fill="#ffffff"/>
<ellipse cx="12.1" cy="13" rx="1.35" ry="1.05" fill="#111"/>
<path d="M20,16.5 L14,21.8 L20,27.2 Z" fill="#e8602c"/><path d="M22,17 L28.4,21.8 L22,26.6 Z" fill="#3fae3f"/></svg>
<div class="t" style="letter-spacing:0.26px;left:166.5px;top:996.9px;font-size:29px;color:#bbbbbb;font-weight:normal">server_test.go</div>
<svg class="abs" style="left:134px;top:1033px" width="24" height="32" viewBox="0 0 24 32">
<circle cx="2.1" cy="5.2" r="2.1" fill="#8bc5e8"/><circle cx="22.3" cy="5.2" r="2.1" fill="#8bc5e8"/>
<ellipse cx="1.5" cy="21" rx="1.5" ry="1.5" fill="#d9a78c"/><ellipse cx="22.7" cy="21" rx="1.5" ry="1.5" fill="#d9a78c"/>
<ellipse cx="5.4" cy="30.8" rx="1.9" ry="1.2" fill="#d9a78c"/><ellipse cx="18.8" cy="30.8" rx="1.9" ry="1.2" fill="#d9a78c"/>
<path d="M2,11 C2,4 6.5,0.2 12.2,0.2 C18,0.2 22.4,4 22.4,11 L22.6,24 C22.6,29.5 18.5,31.6 12.2,31.6 C6,31.6 1.8,29.5 1.8,24 Z" fill="#8bc5e8"/>
<circle cx="7.5" cy="9.4" r="3.5" fill="#ffffff"/><circle cx="16.7" cy="9.4" r="3.5" fill="#ffffff"/>
<circle cx="7.9" cy="9.7" r="1.75" fill="#0c0c0c"/><circle cx="16.9" cy="9.7" r="1.75" fill="#0c0c0c"/>
<rect x="11" y="14.3" width="2.3" height="1.9" rx="0.5" fill="#ffffff"/>
<ellipse cx="12.1" cy="13" rx="1.35" ry="1.05" fill="#111"/>
</svg>
<div class="t" style="letter-spacing:0.93px;left:166.5px;top:1034.9px;font-size:29px;color:#bbbbbb;font-weight:normal">util.go</div>
<div class="abs" style="left:6px;top:1068px;width:466px;height:38px;background:#323b32"></div>
<svg class="abs" style="left:134px;top:1071px" width="28" height="32" viewBox="0 0 28 32">
<circle cx="2.1" cy="5.2" r="2.1" fill="#8bc5e8"/><circle cx="22.3" cy="5.2" r="2.1" fill="#8bc5e8"/>
<ellipse cx="1.5" cy="21" rx="1.5" ry="1.5" fill="#d9a78c"/><ellipse cx="22.7" cy="21" rx="1.5" ry="1.5" fill="#d9a78c"/>
<ellipse cx="5.4" cy="30.8" rx="1.9" ry="1.2" fill="#d9a78c"/><ellipse cx="18.8" cy="30.8" rx="1.9" ry="1.2" fill="#d9a78c"/>
<path d="M2,11 C2,4 6.5,0.2 12.2,0.2 C18,0.2 22.4,4 22.4,11 L22.6,24 C22.6,29.5 18.5,31.6 12.2,31.6 C6,31.6 1.8,29.5 1.8,24 Z" fill="#8bc5e8"/>
<circle cx="7.5" cy="9.4" r="3.5" fill="#ffffff"/><circle cx="16.7" cy="9.4" r="3.5" fill="#ffffff"/>
<circle cx="7.9" cy="9.7" r="1.75" fill="#0c0c0c"/><circle cx="16.9" cy="9.7" r="1.75" fill="#0c0c0c"/>
<rect x="11" y="14.3" width="2.3" height="1.9" rx="0.5" fill="#ffffff"/>
<ellipse cx="12.1" cy="13" rx="1.35" ry="1.05" fill="#111"/>
<path d="M20,16.5 L14,21.8 L20,27.2 Z" fill="#e8602c"/><path d="M22,17 L28.4,21.8 L22,26.6 Z" fill="#3fae3f"/></svg>
<div class="t" style="letter-spacing:0.43px;left:166.5px;top:1072.9px;font-size:29px;color:#bbbbbb;font-weight:normal">util_test.go</div>
<svg class="abs" style="left:52px;top:1118px" width="19" height="17" viewBox="0 0 19 17"><path d="M0.5,0.5 H18.5 L9.5,16.5 Z" fill="#adadad"/></svg>
<svg class="abs" style="left:92px;top:1114px" width="28" height="22" viewBox="0 0 28 22"><path d="M0,0 H12 L15,4.6 H28 V22 H0 Z" fill="#8a98a2"/></svg>
<div class="t" style="letter-spacing:0.88px;left:126.5px;top:1110.9px;font-size:29px;color:#bbbbbb;font-weight:normal">peer</div>
<svg class="abs" style="left:93px;top:1154px" width="18" height="19" viewBox="0 0 18 19"><path d="M0.5,0.8 L17,9.5 L0.5,18.2 Z" fill="#adadad"/></svg>
<svg class="abs" style="left:132px;top:1152px" width="28" height="22" viewBox="0 0 28 22"><path d="M0,0 H12 L15,4.6 H28 V22 H0 Z" fill="#8a98a2"/></svg>
<div class="t" style="letter-spacing:0.50px;left:166.5px;top:1148.9px;font-size:29px;color:#bbbbbb;font-weight:normal">chaincode</div>
<svg class="abs" style="left:93px;top:1192px" width="18" height="19" viewBox="0 0 18 19"><path d="M0.5,0.8 L17,9.5 L0.5,18.2 Z" fill="#adadad"/></svg>
<svg class="abs" style="left:132px;top:1190px" width="28" height="22" viewBox="0 0 28 22"><path d="M0,0 H12 L15,4.6 H28 V22 H0 Z" fill="#8a98a2"/></svg>
<div class="t" style="letter-spacing:0.22px;left:166.5px;top:1186.9px;font-size:29px;color:#bbbbbb;font-weight:normal">channel</div>
<svg class="abs" style="left:93px;top:1230px" width="18" height="19" viewBox="0 0 18 19"><path d="M0.5,0.8 L17,9.5 L0.5,18.2 Z" fill="#adadad"/></svg>
<svg class="abs" style="left:132px;top:1228px" width="28" height="22" viewBox="0 0 28 22"><path d="M0,0 H12 L15,4.6 H28 V22 H0 Z" fill="#8a98a2"/></svg>
<div class="t" style="letter-spacing:0.93px;left:166.5px;top:1224.9px;font-size:29px;color:#bbbbbb;font-weight:normal">clilogging</div>
<div class="abs" style="left:472px;top:156px;width:28px;height:1133px;background:#404345"></div>
<div class="abs" style="left:477px;top:199px;width:17px;height:69px;border-radius:8.5px;background:#585b5d"></div>
<div class="abs" style="left:12px;top:1266px;width:168px;height:16px;border-radius:8px;background:#595b5d"></div>
<div class="abs" style="left:500px;top:110px;width:2000px;height:50px;background:#3c3f41"></div>
<div class="abs" style="left:500px;top:108px;width:2000px;height:2px;background:#4b4d4f"></div>
<div class="abs" style="left:502px;top:110px;width:188px;height:50px;background:#4e5254"></div>
<div class="abs" style="left:502px;top:154px;width:188px;height:6px;background:#4b8a9c"></div>
<div class="abs" style="left:690px;top:158px;width:1810px;height:2px;background:#4b4d4f"></div>
<svg class="abs" style="left:522px;top:118px" width="24" height="32" viewBox="0 0 24 32">
<circle cx="2.1" cy="5.2" r="2.1" fill="#8bc5e8"/><circle cx="22.3" cy="5.2" r="2.1" fill="#8bc5e8"/>
<ellipse cx="1.5" cy="21" rx="1.5" ry="1.5" fill="#d9a78c"/><ellipse cx="22.7" cy="21" rx="1.5" ry="1.5" fill="#d9a78c"/>
<ellipse cx="5.4" cy="30.8" rx="1.9" ry="1.2" fill="#d9a78c"/><ellipse cx="18.8" cy="30.8" rx="1.9" ry="1.2" fill="#d9a78c"/>
<path d="M2,11 C2,4 6.5,0.2 12.2,0.2 C18,0.2 22.4,4 22.4,11 L22.6,24 C22.6,29.5 18.5,31.6 12.2,31.6 C6,31.6 1.8,29.5 1.8,24 Z" fill="#8bc5e8"/>
<circle cx="7.5" cy="9.4" r="3.5" fill="#ffffff"/><circle cx="16.7" cy="9.4" r="3.5" fill="#ffffff"/>
<circle cx="7.9" cy="9.7" r="1.75" fill="#0c0c0c"/><circle cx="16.9" cy="9.7" r="1.75" fill="#0c0c0c"/>
<rect x="11" y="14.3" width="2.3" height="1.9" rx="0.5" fill="#ffffff"/>
<ellipse cx="12.1" cy="13" rx="1.35" ry="1.05" fill="#111"/>
</svg>
<div class="t" style="letter-spacing:-0.71px;left:557px;top:120.3px;font-size:26.5px;color:#bbbbbb">main.go</div>
<svg class="abs" style="left:660px;top:128px" width="15" height="15" viewBox="0 0 15 15"><path d="M1,1 L14,14 M14,1 L1,14" stroke="#666a6c" stroke-width="2.1"/></svg>
<div class="abs" style="left:689px;top:110px;width:2px;height:48px;background:#4b4d4f"></div>
<svg class="abs" style="left:712px;top:118px" width="24" height="32" viewBox="0 0 24 32">
<circle cx="2.1" cy="5.2" r="2.1" fill="#8bc5e8"/><circle cx="22.3" cy="5.2" r="2.1" fill="#8bc5e8"/>
<ellipse cx="1.5" cy="21" rx="1.5" ry="1.5" fill="#d9a78c"/><ellipse cx="22.7" cy="21" rx="1.5" ry="1.5" fill="#d9a78c"/>
<ellipse cx="5.4" cy="30.8" rx="1.9" ry="1.2" fill="#d9a78c"/><ellipse cx="18.8" cy="30.8" rx="1.9" ry="1.2" fill="#d9a78c"/>
<path d="M2,11 C2,4 6.5,0.2 12.2,0.2 C18,0.2 22.4,4 22.4,11 L22.6,24 C22.6,29.5 18.5,31.6 12.2,31.6 C6,31.6 1.8,29.5 1.8,24 Z" fill="#8bc5e8"/>
<circle cx="7.5" cy="9.4" r="3.5" fill="#ffffff"/><circle cx="16.7" cy="9.4" r="3.5" fill="#ffffff"/>
<circle cx="7.9" cy="9.7" r="1.75" fill="#0c0c0c"/><circle cx="16.9" cy="9.7" r="1.75" fill="#0c0c0c"/>
<rect x="11" y="14.3" width="2.3" height="1.9" rx="0.5" fill="#ffffff"/>
<ellipse cx="12.1" cy="13" rx="1.35" ry="1.05" fill="#111"/>
</svg>
<div class="t" style="letter-spacing:0.25px;left:746.25px;top:120.3px;font-size:26.5px;color:#bbbbbb">server.go</div>
<svg class="abs" style="left:869.5px;top:128px" width="15" height="15" viewBox="0 0 15 15"><path d="M1,1 L14,14 M14,1 L1,14" stroke="#666a6c" stroke-width="2.1"/></svg>
<div class="abs" style="left:899.5px;top:110px;width:2px;height:48px;background:#4b4d4f"></div>
<svg class="abs" style="left:922px;top:118px" width="24" height="32" viewBox="0 0 24 32">
<circle cx="2.1" cy="5.2" r="2.1" fill="#8bc5e8"/><circle cx="22.3" cy="5.2" r="2.1" fill="#8bc5e8"/>
<ellipse cx="1.5" cy="21" rx="1.5" ry="1.5" fill="#d9a78c"/><ellipse cx="22.7" cy="21" rx="1.5" ry="1.5" fill="#d9a78c"/>
<ellipse cx="5.4" cy="30.8" rx="1.9" ry="1.2" fill="#d9a78c"/><ellipse cx="18.8" cy="30.8" rx="1.9" ry="1.2" fill="#d9a78c"/>
<path d="M2,11 C2,4 6.5,0.2 12.2,0.2 C18,0.2 22.4,4 22.4,11 L22.6,24 C22.6,29.5 18.5,31.6 12.2,31.6 C6,31.6 1.8,29.5 1.8,24 Z" fill="#8bc5e8"/>
<circle cx="7.5" cy="9.4" r="3.5" fill="#ffffff"/><circle cx="16.7" cy="9.4" r="3.5" fill="#ffffff"/>
<circle cx="7.9" cy="9.7" r="1.75" fill="#0c0c0c"/><circle cx="16.9" cy="9.7" r="1.75" fill="#0c0c0c"/>
<rect x="11" y="14.3" width="2.3" height="1.9" rx="0.5" fill="#ffffff"/>
<ellipse cx="12.1" cy="13" rx="1.35" ry="1.05" fill="#111"/>
</svg>
<div class="t" style="letter-spacing:0.01px;left:956.75px;top:120.3px;font-size:26.5px;color:#bbbbbb">peer.go</div>
<svg class="abs" style="left:1057.5px;top:128px" width="15" height="15" viewBox="0 0 15 15"><path d="M1,1 L14,14 M14,1 L1,14" stroke="#666a6c" stroke-width="2.1"/></svg>
<div class="abs" style="left:1087.5px;top:110px;width:2px;height:48px;background:#4b4d4f"></div>
<svg class="abs" style="left:1110px;top:118px" width="24" height="32" viewBox="0 0 24 32">
<circle cx="2.1" cy="5.2" r="2.1" fill="#8bc5e8"/><circle cx="22.3" cy="5.2" r="2.1" fill="#8bc5e8"/>
<ellipse cx="1.5" cy="21" rx="1.5" ry="1.5" fill="#d9a78c"/><ellipse cx="22.7" cy="21" rx="1.5" ry="1.5" fill="#d9a78c"/>
<ellipse cx="5.4" cy="30.8" rx="1.9" ry="1.2" fill="#d9a78c"/><ellipse cx="18.8" cy="30.8" rx="1.9" ry="1.2" fill="#d9a78c"/>
<path d="M2,11 C2,4 6.5,0.2 12.2,0.2 C18,0.2 22.4,4 22.4,11 L22.6,24 C22.6,29.5 18.5,31.6 12.2,31.6 C6,31.6 1.8,29.5 1.8,24 Z" fill="#8bc5e8"/>
<circle cx="7.5" cy="9.4" r="3.5" fill="#ffffff"/><circle cx="16.7" cy="9.4" r="3.5" fill="#ffffff"/>
<circle cx="7.9" cy="9.7" r="1.75" fill="#0c0c0c"/><circle cx="16.9" cy="9.7" r="1.75" fill="#0c0c0c"/>
<rect x="11" y="14.3" width="2.3" height="1.9" rx="0.5" fill="#ffffff"/>
<ellipse cx="12.1" cy="13" rx="1.35" ry="1.05" fill="#111"/>
</svg>
<div class="t" style="letter-spacing:-0.06px;left:1144.3px;top:120.3px;font-size:26.5px;color:#bbbbbb">committer.go</div>
<svg class="abs" style="left:1308px;top:128px" width="15" height="15" viewBox="0 0 15 15"><path d="M1,1 L14,14 M14,1 L1,14" stroke="#666a6c" stroke-width="2.1"/></svg>
<div class="abs" style="left:1338px;top:110px;width:2px;height:48px;background:#4b4d4f"></div>
<svg class="abs" style="left:1360px;top:118px" width="24" height="32" viewBox="0 0 24 32">
<circle cx="2.1" cy="5.2" r="2.1" fill="#8bc5e8"/><circle cx="22.3" cy="5.2" r="2.1" fill="#8bc5e8"/>
<ellipse cx="1.5" cy="21" rx="1.5" ry="1.5" fill="#d9a78c"/><ellipse cx="22.7" cy="21" rx="1.5" ry="1.5" fill="#d9a78c"/>
<ellipse cx="5.4" cy="30.8" rx="1.9" ry="1.2" fill="#d9a78c"/><ellipse cx="18.8" cy="30.8" rx="1.9" ry="1.2" fill="#d9a78c"/>
<path d="M2,11 C2,4 6.5,0.2 12.2,0.2 C18,0.2 22.4,4 22.4,11 L22.6,24 C22.6,29.5 18.5,31.6 12.2,31.6 C6,31.6 1.8,29.5 1.8,24 Z" fill="#8bc5e8"/>
<circle cx="7.5" cy="9.4" r="3.5" fill="#ffffff"/><circle cx="16.7" cy="9.4" r="3.5" fill="#ffffff"/>
<circle cx="7.9" cy="9.7" r="1.75" fill="#0c0c0c"/><circle cx="16.9" cy="9.7" r="1.75" fill="#0c0c0c"/>
<rect x="11" y="14.3" width="2.3" height="1.9" rx="0.5" fill="#ffffff"/>
<ellipse cx="12.1" cy="13" rx="1.35" ry="1.05" fill="#111"/>
</svg>
<div class="t" style="letter-spacing:-0.66px;left:1394.6px;top:120.3px;font-size:26.5px;color:#bbbbbb">committer_impl.go</div>
<svg class="abs" style="left:1613.7px;top:128px" width="15" height="15" viewBox="0 0 15 15"><path d="M1,1 L14,14 M14,1 L1,14" stroke="#666a6c" stroke-width="2.1"/></svg>
<div class="abs" style="left:1643px;top:110px;width:2px;height:48px;background:#4b4d4f"></div>
<svg class="abs" style="left:1666px;top:118px" width="24" height="32" viewBox="0 0 24 32">
<circle cx="2.1" cy="5.2" r="2.1" fill="#8bc5e8"/><circle cx="22.3" cy="5.2" r="2.1" fill="#8bc5e8"/>
<ellipse cx="1.5" cy="21" rx="1.5" ry="1.5" fill="#d9a78c"/><ellipse cx="22.7" cy="21" rx="1.5" ry="1.5" fill="#d9a78c"/>
<ellipse cx="5.4" cy="30.8" rx="1.9" ry="1.2" fill="#d9a78c"/><ellipse cx="18.8" cy="30.8" rx="1.9" ry="1.2" fill="#d9a78c"/>
<path d="M2,11 C2,4 6.5,0.2 12.2,0.2 C18,0.2 22.4,4 22.4,11 L22.6,24 C22.6,29.5 18.5,31.6 12.2,31.6 C6,31.6 1.8,29.5 1.8,24 Z" fill="#8bc5e8"/>
<circle cx="7.5" cy="9.4" r="3.5" fill="#ffffff"/><circle cx="16.7" cy="9.4" r="3.5" fill="#ffffff"/>
<circle cx="7.9" cy="9.7" r="1.75" fill="#0c0c0c"/><circle cx="16.9" cy="9.7" r="1.75" fill="#0c0c0c"/>
<rect x="11" y="14.3" width="2.3" height="1.9" rx="0.5" fill="#ffffff"/>
<ellipse cx="12.1" cy="13" rx="1.35" ry="1.05" fill="#111"/>
</svg>
<div class="t" style="letter-spacing:-0.58px;left:1700.3px;top:120.3px;font-size:26.5px;color:#bbbbbb">common.pb.go</div>
<svg class="abs" style="left:1881.8px;top:128px" width="15" height="15" viewBox="0 0 15 15"><path d="M1,1 L14,14 M14,1 L1,14" stroke="#666a6c" stroke-width="2.1"/></svg>
<div class="abs" style="left:1911.7px;top:110px;width:2px;height:48px;background:#4b4d4f"></div>
<svg class="abs" style="left:1934px;top:118px" width="24" height="32" viewBox="0 0 24 32">
<circle cx="2.1" cy="5.2" r="2.1" fill="#8bc5e8"/><circle cx="22.3" cy="5.2" r="2.1" fill="#8bc5e8"/>
<ellipse cx="1.5" cy="21" rx="1.5" ry="1.5" fill="#d9a78c"/><ellipse cx="22.7" cy="21" rx="1.5" ry="1.5" fill="#d9a78c"/>
<ellipse cx="5.4" cy="30.8" rx="1.9" ry="1.2" fill="#d9a78c"/><ellipse cx="18.8" cy="30.8" rx="1.9" ry="1.2" fill="#d9a78c"/>
<path d="M2,11 C2,4 6.5,0.2 12.2,0.2 C18,0.2 22.4,4 22.4,11 L22.6,24 C22.6,29.5 18.5,31.6 12.2,31.6 C6,31.6 1.8,29.5 1.8,24 Z" fill="#8bc5e8"/>
<circle cx="7.5" cy="9.4" r="3.5" fill="#ffffff"/><circle cx="16.7" cy="9.4" r="3.5" fill="#ffffff"/>
<circle cx="7.9" cy="9.7" r="1.75" fill="#0c0c0c"/><circle cx="16.9" cy="9.7" r="1.75" fill="#0c0c0c"/>
<rect x="11" y="14.3" width="2.3" height="1.9" rx="0.5" fill="#ffffff"/>
<ellipse cx="12.1" cy="13" rx="1.35" ry="1.05" fill="#111"/>
</svg>
<div class="t" style="letter-spacing:-0.25px;left:1968.5px;top:120.3px;font-size:26.5px;color:#bbbbbb">core/.../ledger_interface.go</div>
<svg class="abs" style="left:2289.5px;top:128px" width="15" height="15" viewBox="0 0 15 15"><path d="M1,1 L14,14 M14,1 L1,14" stroke="#666a6c" stroke-width="2.1"/></svg>
<div class="abs" style="left:2319.3px;top:110px;width:2px;height:48px;background:#4b4d4f"></div>
<svg class="abs" style="left:2342px;top:118px" width="24" height="32" viewBox="0 0 24 32">
<circle cx="2.1" cy="5.2" r="2.1" fill="#8bc5e8"/><circle cx="22.3" cy="5.2" r="2.1" fill="#8bc5e8"/>
<ellipse cx="1.5" cy="21" rx="1.5" ry="1.5" fill="#d9a78c"/><ellipse cx="22.7" cy="21" rx="1.5" ry="1.5" fill="#d9a78c"/>
<ellipse cx="5.4" cy="30.8" rx="1.9" ry="1.2" fill="#d9a78c"/><ellipse cx="18.8" cy="30.8" rx="1.9" ry="1.2" fill="#d9a78c"/>
<path d="M2,11 C2,4 6.5,0.2 12.2,0.2 C18,0.2 22.4,4 22.4,11 L22.6,24 C22.6,29.5 18.5,31.6 12.2,31.6 C6,31.6 1.8,29.5 1.8,24 Z" fill="#8bc5e8"/>
<circle cx="7.5" cy="9.4" r="3.5" fill="#ffffff"/><circle cx="16.7" cy="9.4" r="3.5" fill="#ffffff"/>
<circle cx="7.9" cy="9.7" r="1.75" fill="#0c0c0c"/><circle cx="16.9" cy="9.7" r="1.75" fill="#0c0c0c"/>
<rect x="11" y="14.3" width="2.3" height="1.9" rx="0.5" fill="#ffffff"/>
<ellipse cx="12.1" cy="13" rx="1.35" ry="1.05" fill="#111"/>
</svg>
<div class="t" style="left:2376.7px;top:120.3px;font-size:26.5px;letter-spacing:-0.55px;color:#bbbbbb">leveldb_helper.go</div>
<div class="abs" id="editor" style="left:500px;top:160px;width:2000px;height:1083px;background:#2b2b2b;overflow:hidden">
<div class="abs" style="left:0;top:0;width:146px;height:1083px;background:#313335"></div>
<div class="abs" style="left:0;top:0;width:2px;height:1083px;background:#2d2f31"></div>
<div class="abs" style="left:147px;top:342px;width:1853px;height:50px;background:#42362c"></div>
<div class="abs" style="left:147px;top:392px;width:1853px;height:50px;background:#42362c"></div>
<div class="abs" style="left:147px;top:742px;width:1853px;height:50px;background:#42362c"></div>
<div class="abs" style="left:147px;top:442px;width:1853px;height:50px;background:#323232"></div>
<div class="abs" style="left:320px;top:442px;width:360px;height:50px;background:#2f3b54"></div>
<div class="abs" style="left:243px;top:192px;width:2px;height:150px;background:#3a3a3a"></div>
<div class="abs" style="left:243px;top:492px;width:2px;height:250px;background:#3a3a3a"></div>
<div class="abs" style="left:243px;top:892px;width:2px;height:50px;background:#3a3a3a"></div>
<div class="abs" style="left:145px;top:0;width:2px;height:1083px;background:#545454"></div>
<svg class="abs" style="left:135px;top:11.5px" width="24" height="27" viewBox="0 0 24 27"><path d="M2,1.2 H22 V13.5 L12,25 L2,13.5 Z" fill="#2b2b2b" stroke="#6c6c6c" stroke-width="2"/><path d="M6.5,9 H17.5" stroke="#6c6c6c" stroke-width="2"/></svg>
<svg class="abs" style="left:135px;top:161.5px" width="24" height="27" viewBox="0 0 24 27"><path d="M2,1.2 H22 V13.5 L12,25 L2,13.5 Z" fill="#2b2b2b" stroke="#6c6c6c" stroke-width="2"/><path d="M6.5,9 H17.5" stroke="#6c6c6c" stroke-width="2"/></svg>
<svg class="abs" style="left:135px;top:861.5px" width="24" height="27" viewBox="0 0 24 27"><path d="M2,1.2 H22 V13.5 L12,25 L2,13.5 Z" fill="#2b2b2b" stroke="#6c6c6c" stroke-width="2"/><path d="M6.5,9 H17.5" stroke="#6c6c6c" stroke-width="2"/></svg>
<svg class="abs" style="left:135px;top:808px" width="24" height="27" viewBox="0 0 24 27"><path d="M2,25.5 H22 V12.5 L12,1.5 L2,12.5 Z" fill="#2b2b2b" stroke="#6c6c6c" stroke-width="2"/><path d="M6.5,18.5 H17.5" stroke="#6c6c6c" stroke-width="2"/></svg>
<svg class="abs" style="left:135px;top:908px" width="24" height="27" viewBox="0 0 24 27"><path d="M2,25.5 H22 V12.5 L12,1.5 L2,12.5 Z" fill="#2b2b2b" stroke="#6c6c6c" stroke-width="2"/><path d="M6.5,18.5 H17.5" stroke="#6c6c6c" stroke-width="2"/></svg>
<svg class="abs" style="left:135px;top:958px" width="24" height="27" viewBox="0 0 24 27"><path d="M2,25.5 H22 V12.5 L12,1.5 L2,12.5 Z" fill="#2b2b2b" stroke="#6c6c6c" stroke-width="2"/><path d="M6.5,18.5 H17.5" stroke="#6c6c6c" stroke-width="2"/></svg>
<svg class="abs" style="left:135px;top:1058px" width="24" height="27" viewBox="0 0 24 27"><path d="M2,25.5 H22 V12.5 L12,1.5 L2,12.5 Z" fill="#2b2b2b" stroke="#6c6c6c" stroke-width="2"/><path d="M6.5,18.5 H17.5" stroke="#6c6c6c" stroke-width="2"/></svg>
<div class="abs" style="left:86px;top:352px;width:31px;height:31px;border-radius:50%;background:linear-gradient(#f7937f,#e3624f)"></div>
<div class="abs" style="left:86px;top:402px;width:31px;height:31px;border-radius:50%;background:linear-gradient(#f7937f,#e3624f)"></div>
<div class="abs" style="left:86px;top:752px;width:31px;height:31px;border-radius:50%;background:linear-gradient(#f7937f,#e3624f)"></div>
<div class="ln" style="top:-1.9000000000000004px;left:29px">64</div>
<div class="ln" style="top:48.1px;left:29px">65</div>
<div class="ln" style="top:98.1px;left:29px">66</div>
<div class="ln" style="top:148.1px;left:29px">67</div>
<div class="ln" style="top:198.1px;left:29px">68</div>
<div class="ln" style="top:248.1px;left:29px">69</div>
<div class="ln" style="top:298.1px;left:29px">70</div>
<div class="ln" style="top:348.1px;left:29px">71</div>
<div class="ln" style="top:398.1px;left:29px">72</div>
<div class="ln" style="top:448.1px;left:29px">73</div>
<div class="ln" style="top:498.1px;left:29px">74</div>
<div class="ln" style="top:548.1px;left:29px">75</div>
<div class="ln" style="top:598.1px;left:29px">76</div>
<div class="ln" style="top:648.1px;left:29px">77</div>
<div class="ln" style="top:698.1px;left:29px">78</div>
<div class="ln" style="top:748.1px;left:29px">79</div>
<div class="ln" style="top:798.1px;left:29px">80</div>
<div class="ln" style="top:848.1px;left:29px">81</div>
<div class="ln" style="top:898.1px;left:29px">82</div>
<div class="ln" style="top:948.1px;left:29px">83</div>
<div class="ln" style="top:998.1px;left:29px">84</div>
<div class="ln" style="top:1048.1px;left:29px">85</div>
<div class="code" style="left:240px;top:-1.9000000000000004px"><span class="kw">switch</span> kingpin.<span class="fn">MustParse</span>(app.<span class="fn">Parse</span>(os.Args[<span class="nu">1</span>:])) {</div>
<div class="code" style="left:240px;top:98.1px"><span class="cm">// &quot;start&quot; command</span></div>
<div class="code" style="left:240px;top:148.1px"><span class="kw">case</span> start.<span class="fn">FullCommand</span>():</div>
<div class="code" style="left:320px;top:198.1px">logger.<span class="fn">Infof</span>(</div>
<div class="hint" style="left:583px;top:196px;width:121px;height:42px"><span class="t" style="letter-spacing:1.19px;left:10.5px;top:8.8px;font-size:30px">format:</span></div>
<div class="code" style="left:708px;top:198.1px"><span class="st">&quot;Starting %s&quot;</span><span class="pu">,</span> metadata.<span class="fn">GetVersionInfo</span>())</div>
<div class="code" style="left:320px;top:248.1px">conf := config.<span class="fn">Load</span>()</div>
<div class="code" style="left:320px;top:298.1px"><span class="fn">initializeLoggingLevel</span>(conf)</div>
<div class="code" style="left:320px;top:348.1px"><span class="fn">initializeProfilingService</span>(conf)</div>
<div class="code" style="left:320px;top:398.1px">grpcServer := <span class="fn">initializeGrpcServer</span>(conf)</div>
<svg class="abs" style="left:320px;top:435px" width="82" height="8" viewBox="0 0 82 8"><path d="M0,2 Q3,8 6,4 T12,4 T18,4 T24,4 T30,4 T36,4 T42,4 T48,4 T54,4 T60,4 T66,4 T72,4 T78,4" fill="none" stroke="#4c8a5c" stroke-width="2"/></svg>
<div class="code" style="left:320px;top:448.1px"><span class="fn">initializeLocalMsp</span>(conf)</div>
<div class="code" style="left:320px;top:498.1px">signer := localmsp.<span class="fn">NewSigner</span>()</div>
<div class="code" style="left:320px;top:548.1px">manager := <span class="fn">initializeMultiChainManager</span>(conf<span class="pu">,</span> signer)</div>
<div class="code" style="left:320px;top:598.1px">server := <span class="fn">NewServer</span>(manager<span class="pu">,</span> signer)</div>
<div class="code" style="left:320px;top:648.1px">ab.<span class="fn">RegisterAtomicBroadcastServer</span>(grpcServer.<span class="fn">Server</span>()<span class="pu">,</span> server)</div>
<div class="code" style="left:320px;top:698.1px">logger.<span class="fn">Info</span>(</div>
<div class="hint" style="left:564px;top:696px;width:89px;height:42px"><span class="t" style="letter-spacing:1.20px;left:10.5px;top:8.8px;font-size:30px">args:</span></div>
<div class="code" style="left:658px;top:698.1px"><span class="st">&quot;Beginning to serve requests&quot;</span>)</div>
<div class="code" style="left:320px;top:748.1px">grpcServer.<span class="fn">Start</span>()</div>
<div class="code" style="left:240px;top:798.1px"><span class="cm">// &quot;version&quot; command</span></div>
<div class="code" style="left:240px;top:848.1px"><span class="kw">case</span> version.<span class="fn">FullCommand</span>():</div>
<div class="code" style="left:320px;top:898.1px">fmt.<span class="fn">Println</span>(metadata.<span class="fn">GetVersionInfo</span>())</div>
<div class="code" style="left:240px;top:948.1px">}</div>
<div class="abs" style="left:164px;top:1058px;width:1900px;height:20px;border-radius:10px;background:#4b4b4b"></div>
</div>
<div class="abs" style="left:500px;top:1243px;width:2000px;height:46px;background:#323436;border-top:1px solid #393b3d;box-sizing:border-box"></div>
<div class="abs" style="left:500px;top:160px;width:2px;height:1129px;background:#2d2f31"></div>
<div class="t" style="letter-spacing:1.38px;left:666px;top:1255.6px;font-size:24.5px;color:#bbbbbb">main()</div>
<div class="abs" style="left:6px;top:1289px;width:2494px;height:21px;background:#3c3f41;border-top:1px solid #515355;box-sizing:border-box"></div>
<div class="t" style="left:16px;top:1302px;font-size:27px;color:#77797b">Debug</div>
<svg class="abs" style="left:100px;top:1296px" width="24" height="32" viewBox="0 0 24 32">
<circle cx="2.1" cy="5.2" r="2.1" fill="#6f8ea6"/><circle cx="22.3" cy="5.2" r="2.1" fill="#6f8ea6"/>
<ellipse cx="1.5" cy="21" rx="1.5" ry="1.5" fill="#8f8378"/><ellipse cx="22.7" cy="21" rx="1.5" ry="1.5" fill="#8f8378"/>
<ellipse cx="5.4" cy="30.8" rx="1.9" ry="1.2" fill="#8f8378"/><ellipse cx="18.8" cy="30.8" rx="1.9" ry="1.2" fill="#8f8378"/>
<path d="M2,11 C2,4 6.5,0.2 12.2,0.2 C18,0.2 22.4,4 22.4,11 L22.6,24 C22.6,29.5 18.5,31.6 12.2,31.6 C6,31.6 1.8,29.5 1.8,24 Z" fill="#6f8ea6"/>
<circle cx="7.5" cy="9.4" r="3.5" fill="#c9d2da"/><circle cx="16.7" cy="9.4" r="3.5" fill="#c9d2da"/>
<circle cx="7.9" cy="9.7" r="1.75" fill="#0c0c0c"/><circle cx="16.9" cy="9.7" r="1.75" fill="#0c0c0c"/>
<rect x="11" y="14.3" width="2.3" height="1.9" rx="0.5" fill="#c9d2da"/>
<ellipse cx="12.1" cy="13" rx="1.35" ry="1.05" fill="#111"/>
</svg>
<div class="t" style="left:138px;top:1302px;font-size:27px;letter-spacing:0.3px;color:#77797b">orderer start</div>
<svg class="abs" style="left:1761px;top:1299px" width="22" height="22" viewBox="-11 -11 22 22"><g fill="#8a8c8e"><circle r="7"/><rect x="-2.2" y="-11" width="4.4" height="5"/><rect x="-11" y="-2.2" width="5" height="4.4"/><rect x="6" y="-2.2" width="5" height="4.4"/><g transform="rotate(45)"><rect x="-2.2" y="-11" width="4.4" height="5"/><rect x="-11" y="-2.2" width="5" height="4.4"/><rect x="6" y="-2.2" width="5" height="4.4"/></g></g></svg>
<div class="abs" style="left:1823px;top:1301px;width:2px;height:10px;background:#8a8c8e"></div>
<div class="abs" style="left:1856px;top:1289px;width:15px;height:21px;background:#2f3133"></div>
<div class="t" style="left:1882px;top:1301.5px;font-size:27px;color:#77797b">Event Log</div>
<svg class="abs" style="left:0;top:0;pointer-events:none" width="2500" height="1310" viewBox="0 0 2500 1310"><path d="M1023.9,796.6 L378.3,950.0 L374.2,933.5 L332.0,975.0 L389.3,993.6 L384.5,974.7 L1026.1,805.4 A4.5,4.5 0 0 0 1023.9,796.6 Z" fill="#ef5628"/></svg>
<div class="t" style="letter-spacing:-0.14px;left:466.7px;top:805.7px;font-size:36.5px;color:#ef5628;-webkit-text-stroke-width:0">exists in the server.go</div>
</body></html>
